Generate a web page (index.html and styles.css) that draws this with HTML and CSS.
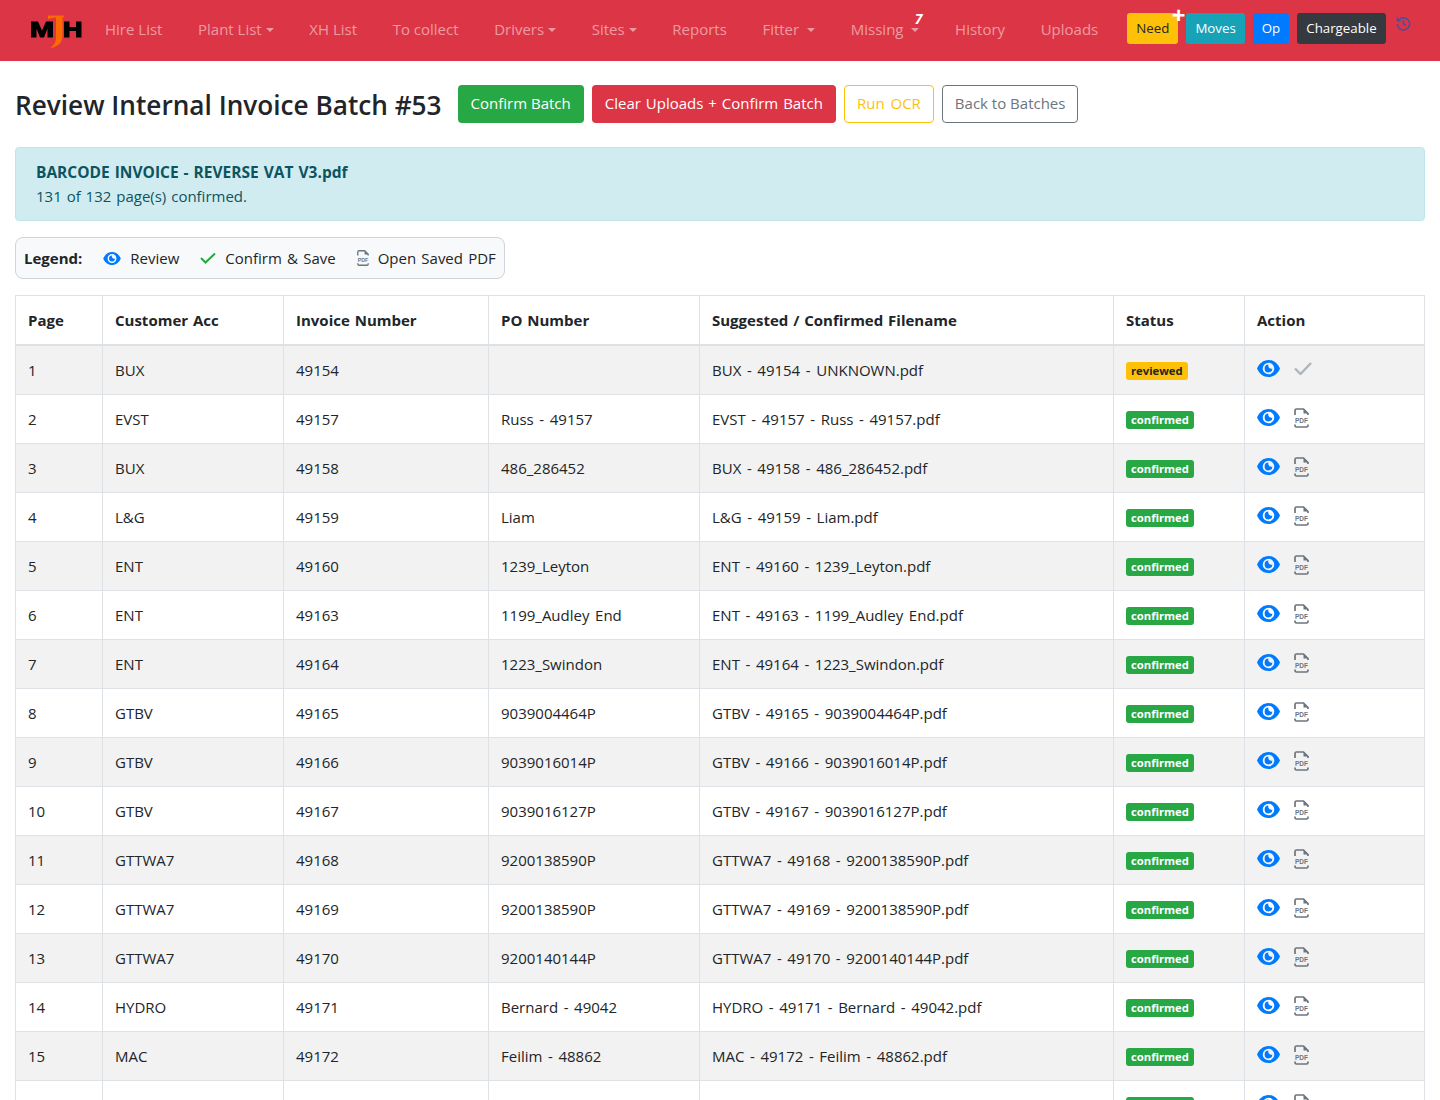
FILE: index.html
```html
<!DOCTYPE html>
<html lang="en">
<head>
    <meta charset="UTF-8">
    <meta name="viewport" content="width=device-width, initial-scale=1.0">
    <title>Review Internal Invoice Batch</title>
    <link rel="stylesheet" href="styles.css">
</head>
<body>
    <svg class="icon-defs" width="0" height="0" aria-hidden="true">
        <symbol id="icon-eye" viewBox="0 0 23 17">
            <path fill="#007bff" fill-rule="evenodd" d="M11.500 0C6.300 0 2.200 3.500 0 8.500 2.200 13.500 6.300 17 11.500 17S20.800 13.500 23 8.500C20.800 3.500 16.700 0 11.500 0zM11.500 14.300A5.800 5.800 0 1 1 11.500 2.700a5.800 5.800 0 0 1 0 11.600z"/>
            <path fill="#007bff" d="M11.500 4.600a3.900 3.900 0 1 0 3.900 3.900 3 3 0 0 1-3.900-3.900z"/>
        </symbol>
    </svg>

    <nav class="navbar">
        <a class="brand" href="#">
            <svg width="52" height="36" viewBox="0 0 52 36">
                <path fill="#000" d="M1 8.500h7l4 9 4-9h7V24.500h-5.500v-9l-3.500 9h-4l-3.500-9v9H1z"/>
                <path fill="#ff6a00" d="M18 2.500h16v1.500h-1.500V22q0 8-6 11q-3 1.800-6.500 2q5-3 6-9V4.500q-4 0-8 1.500z"/>
                <path fill="#000" d="M34 8.500h5.500v5.500h6.500V8.500h5.500V24.500h-5.500v-6.500h-6.500v6.500H34z"/>
            </svg>
        </a>
        <ul class="nav-links">
            <li><a href="#">Hire List</a></li>
            <li><a href="#" class="caret">Plant List</a></li>
            <li><a href="#">XH List</a></li>
            <li><a href="#">To collect</a></li>
            <li><a href="#" class="caret">Drivers</a></li>
            <li><a href="#" class="caret">Sites</a></li>
            <li><a href="#">Reports</a></li>
            <li><a href="#" class="caret wide-caret">Fitter</a></li>
            <li class="has-count"><a href="#" class="caret wide-caret">Missing</a><span class="nav-count">7</span></li>
            <li><a href="#">History</a></li>
            <li><a href="#">Uploads</a></li>
        </ul>
        <div class="nav-buttons">
            <a href="#" class="nav-btn nav-need">Need<span class="plus">+</span></a>
            <a href="#" class="nav-btn nav-moves">Moves</a>
            <a href="#" class="nav-btn nav-op">Op</a>
            <a href="#" class="nav-btn nav-charge">Chargeable</a>
            <svg class="history-icon" width="15" height="15" viewBox="0 0 16 16">
                <path fill="none" stroke="#3f51a5" stroke-width="1.600" d="M2.800 4.500A6.500 6.500 0 1 1 1.500 8.500M1.500 1.500v3.500H5M8 4.500V8.500l2.500 1.500"/>
            </svg>
        </div>
    </nav>

    <main class="container">
        <div class="page-head">
            <h1>Review Internal Invoice Batch #53</h1>
            <a href="#" class="btn btn-green">Confirm Batch</a>
            <a href="#" class="btn btn-red">Clear Uploads + Confirm Batch</a>
            <a href="#" class="btn btn-outline-yellow">Run OCR</a>
            <a href="#" class="btn btn-outline-grey">Back to Batches</a>
        </div>

        <div class="alert">
            <strong>BARCODE INVOICE - REVERSE VAT V3.pdf</strong><br>
            131 of 132 page(s) confirmed.
        </div>

        <div class="legend">
            <strong>Legend:</strong>
            <span class="legend-item"><svg class="eye"><use href="#icon-eye"/></svg>Review</span>
            <span class="legend-item"><svg class="legend-check" viewBox="0 0 16 12"><path fill="none" stroke="#28a745" stroke-width="2" d="M1 6l4.500 4.500L15 1.500"/></svg>Confirm &amp; Save</span>
            <span class="legend-item"><span class="pdf-small" data-pdf></span>Open Saved PDF</span>
        </div>

        <table>
            <thead>
                <tr>
                    <th class="col-page">Page</th>
                    <th class="col-acc">Customer Acc</th>
                    <th class="col-inv">Invoice Number</th>
                    <th class="col-po">PO Number</th>
                    <th class="col-file">Suggested / Confirmed Filename</th>
                    <th class="col-status">Status</th>
                    <th>Action</th>
                </tr>
            </thead>
            <tbody id="rows"></tbody>
        </table>
    </main>

    <script>
        const pdfIcon = `<svg viewBox="0 0 15 20">
            <path fill="none" stroke="#6c757d" stroke-width="1.700" d="M1 7V2.500Q1 1 2.500 1H9.500L14 5.500V7M1 16.500V17.500Q1 19 2.500 19H12.500Q14 19 14 17.500V16.500"/>
            <path fill="#6c757d" d="M9.500 1L14 5.500H9.500z"/>
            <text x="1" y="15" textLength="13" lengthAdjust="spacingAndGlyphs" class="pdf-label">PDF</text>
        </svg>`;
        const rows = [
            [1, 'BUX', '49154', '', 'BUX - 49154 - UNKNOWN.pdf', 'reviewed'],
            [2, 'EVST', '49157', 'Russ - 49157', 'EVST - 49157 - Russ - 49157.pdf', 'confirmed'],
            [3, 'BUX', '49158', '486_286452', 'BUX - 49158 - 486_286452.pdf', 'confirmed'],
            [4, 'L&amp;G', '49159', 'Liam', 'L&amp;G - 49159 - Liam.pdf', 'confirmed'],
            [5, 'ENT', '49160', '1239_Leyton', 'ENT - 49160 - 1239_Leyton.pdf', 'confirmed'],
            [6, 'ENT', '49163', '1199_Audley End', 'ENT - 49163 - 1199_Audley End.pdf', 'confirmed'],
            [7, 'ENT', '49164', '1223_Swindon', 'ENT - 49164 - 1223_Swindon.pdf', 'confirmed'],
            [8, 'GTBV', '49165', '9039004464P', 'GTBV - 49165 - 9039004464P.pdf', 'confirmed'],
            [9, 'GTBV', '49166', '9039016014P', 'GTBV - 49166 - 9039016014P.pdf', 'confirmed'],
            [10, 'GTBV', '49167', '9039016127P', 'GTBV - 49167 - 9039016127P.pdf', 'confirmed'],
            [11, 'GTTWA7', '49168', '9200138590P', 'GTTWA7 - 49168 - 9200138590P.pdf', 'confirmed'],
            [12, 'GTTWA7', '49169', '9200138590P', 'GTTWA7 - 49169 - 9200138590P.pdf', 'confirmed'],
            [13, 'GTTWA7', '49170', '9200140144P', 'GTTWA7 - 49170 - 9200140144P.pdf', 'confirmed'],
            [14, 'HYDRO', '49171', 'Bernard - 49042', 'HYDRO - 49171 - Bernard - 49042.pdf', 'confirmed'],
            [15, 'MAC', '49172', 'Feilim - 48862', 'MAC - 49172 - Feilim - 48862.pdf', 'confirmed'],
            [16, 'MAC', '49173', 'Feilim - 48863', 'MAC - 49173 - Feilim - 48863.pdf', 'confirmed']
        ];
        const tbody = document.getElementById('rows');
        rows.forEach(r => {
            const second = r[5] === 'reviewed'
                ? '<svg class="act-check" viewBox="0 0 18 13"><path fill="none" stroke="#adb5bd" stroke-width="2.400" d="M1 6.500l5.500 5.500L17 1"/></svg>'
                : `<span class="pdf-big">${pdfIcon}</span>`;
            const row = document.createElement('tr');
            row.innerHTML = `
                <td>${r[0]}</td>
                <td>${r[1]}</td>
                <td>${r[2]}</td>
                <td>${r[3]}</td>
                <td>${r[4]}</td>
                <td><span class="badge badge-${r[5]}">${r[5]}</span></td>
                <td><div class="actions"><svg class="eye-big"><use href="#icon-eye"/></svg>${second}</div></td>
            `;
            tbody.appendChild(row);
        });
        document.querySelector('[data-pdf]').innerHTML = pdfIcon;
    </script>
</body>
</html>
```

FILE: styles.css
```css
* {
    box-sizing: border-box;
}
body {
    font-family: "Open Sans", "Noto Sans", Arial, sans-serif;
    font-size: 15px;
    line-height: 24px;
    color: #212529;
    background-color: #fff;
    margin: 0;
    padding: 0;
}
a {
    text-decoration: none;
}
.icon-defs {
    position: absolute;
}
.pdf-label {
    font-family: "Liberation Sans", Arial, sans-serif;
    font-size: 7.500px;
    font-weight: bold;
    fill: #6c757d;
}

.navbar {
    display: flex;
    align-items: center;
    height: 61px;
    padding: 0 16px 0 30px;
    background-color: #dc3545;
}
.brand {
    display: flex;
    width: 75px;
}
.nav-links {
    display: flex;
    list-style: none;
    margin: 0 29px 0 0;
    padding: 0;
    gap: 35.600px;
    position: relative;
    top: -2px;
}
.nav-links a {
    color: rgba(255, 255, 255, 0.5);
}
.has-count {
    position: relative;
}
.nav-count {
    position: absolute;
    top: -10px;
    right: -3px;
    color: #fff;
    font-size: 14px;
    font-weight: bold;
    font-style: italic;
}
.caret::after {
    content: "";
    display: inline-block;
    margin-left: 4px;
    vertical-align: 3px;
    border-top: 4.800px solid;
    border-right: 4.800px solid transparent;
    border-left: 4.800px solid transparent;
}
.wide-caret::after {
    margin-left: 8px;
}
.nav-buttons {
    display: flex;
    align-items: flex-start;
    gap: 8px;
    margin-bottom: 4px;
}
.nav-btn {
    position: relative;
    height: 31px;
    padding: 0 9px;
    font-size: 13.300px;
    line-height: 31px;
    border-radius: 3px;
    color: #fff;
}
.nav-need {
    background-color: #ffc107;
    color: #212529;
}
.nav-moves {
    background-color: #17a2b8;
}
.nav-op {
    background-color: #007bff;
}
.nav-charge {
    background-color: #343a40;
}
.plus {
    position: absolute;
    top: -10px;
    right: -7px;
    color: #fff;
    font-size: 24px;
    font-weight: bold;
    line-height: 24px;
}
.history-icon {
    margin: 3px 0 0 2px;
}

.container {
    padding: 0 15px;
}
.page-head {
    display: flex;
    align-items: center;
    gap: 8px;
    padding-top: 24px;
    margin-bottom: 24px;
}
h1 {
    font-size: 26.200px;
    font-weight: 600;
    line-height: 36px;
    margin: 0 8px 0 0;
    padding-top: 2px;
}
.btn {
    display: inline-block;
    padding: 5px 12px 7px;
    border: 1px solid transparent;
    border-radius: 4px;
    color: #fff;
}
.btn-green {
    background-color: #28a745;
}
.btn-red {
    background-color: #dc3545;
    word-spacing: 1px;
}
.btn-outline-yellow {
    border-color: #ffc107;
    color: #ffc107;
    word-spacing: 2px;
}
.btn-outline-grey {
    border-color: #6c757d;
    color: #6c757d;
}

.alert {
    padding: 12px 20px;
    margin-bottom: 16px;
    color: #0c5460;
    word-spacing: 1px;
    background-color: #d1ecf1;
    border: 1px solid #bee5eb;
    border-radius: 4px;
}
.alert strong {
    font-size: 15.500px;
}
.legend {
    display: inline-flex;
    align-items: center;
    gap: 21px;
    height: 42px;
    padding: 0 8px;
    margin-bottom: 16px;
    background-color: #f8f9fa;
    border: 1px solid #ced4da;
    border-radius: 8px;
    vertical-align: top;
    word-spacing: 1.300px;
}
.legend-item {
    display: inline-flex;
    align-items: center;
    gap: 9px;
}
.eye {
    width: 18px;
    height: 13px;
}
.legend-check {
    width: 16px;
    height: 12px;
}
.pdf-small {
    display: block;
    width: 12px;
    height: 16px;
}
.pdf-small svg, .pdf-big svg {
    display: block;
    width: 100%;
    height: 100%;
}

table {
    width: 100%;
    border-collapse: collapse;
    table-layout: fixed;
}
table th, table td {
    padding: 12px;
    border: 1px solid #dee2e6;
    text-align: left;
    vertical-align: top;
    word-spacing: 1.700px;
}
table th {
    border-bottom: 2px solid #dee2e6;
    word-spacing: 1px;
}
tbody tr:nth-child(odd) {
    background-color: #f2f2f2;
}
.col-page {
    width: 87px;
}
.col-acc {
    width: 181px;
}
.col-inv {
    width: 205px;
}
.col-po {
    width: 211px;
}
.col-file {
    width: 414px;
}
.col-status {
    width: 131px;
}
.badge {
    display: inline-block;
    margin-top: 4px;
    padding: 3px 5px;
    font-size: 11.250px;
    font-weight: bold;
    line-height: 12px;
    vertical-align: top;
    border-radius: 3px;
}
.badge-reviewed {
    background-color: #ffc107;
    color: #212529;
}
.badge-confirmed {
    background-color: #28a745;
    color: #fff;
}
.actions {
    display: flex;
    align-items: flex-start;
    height: 24px;
    gap: 14px;
}
.eye-big {
    width: 23px;
    height: 17px;
    margin-top: 2px;
}
.pdf-big {
    display: block;
    width: 15px;
    height: 20px;
    margin-top: 1px;
}
.act-check {
    width: 18px;
    height: 13px;
    margin-top: 4px;
}
```
